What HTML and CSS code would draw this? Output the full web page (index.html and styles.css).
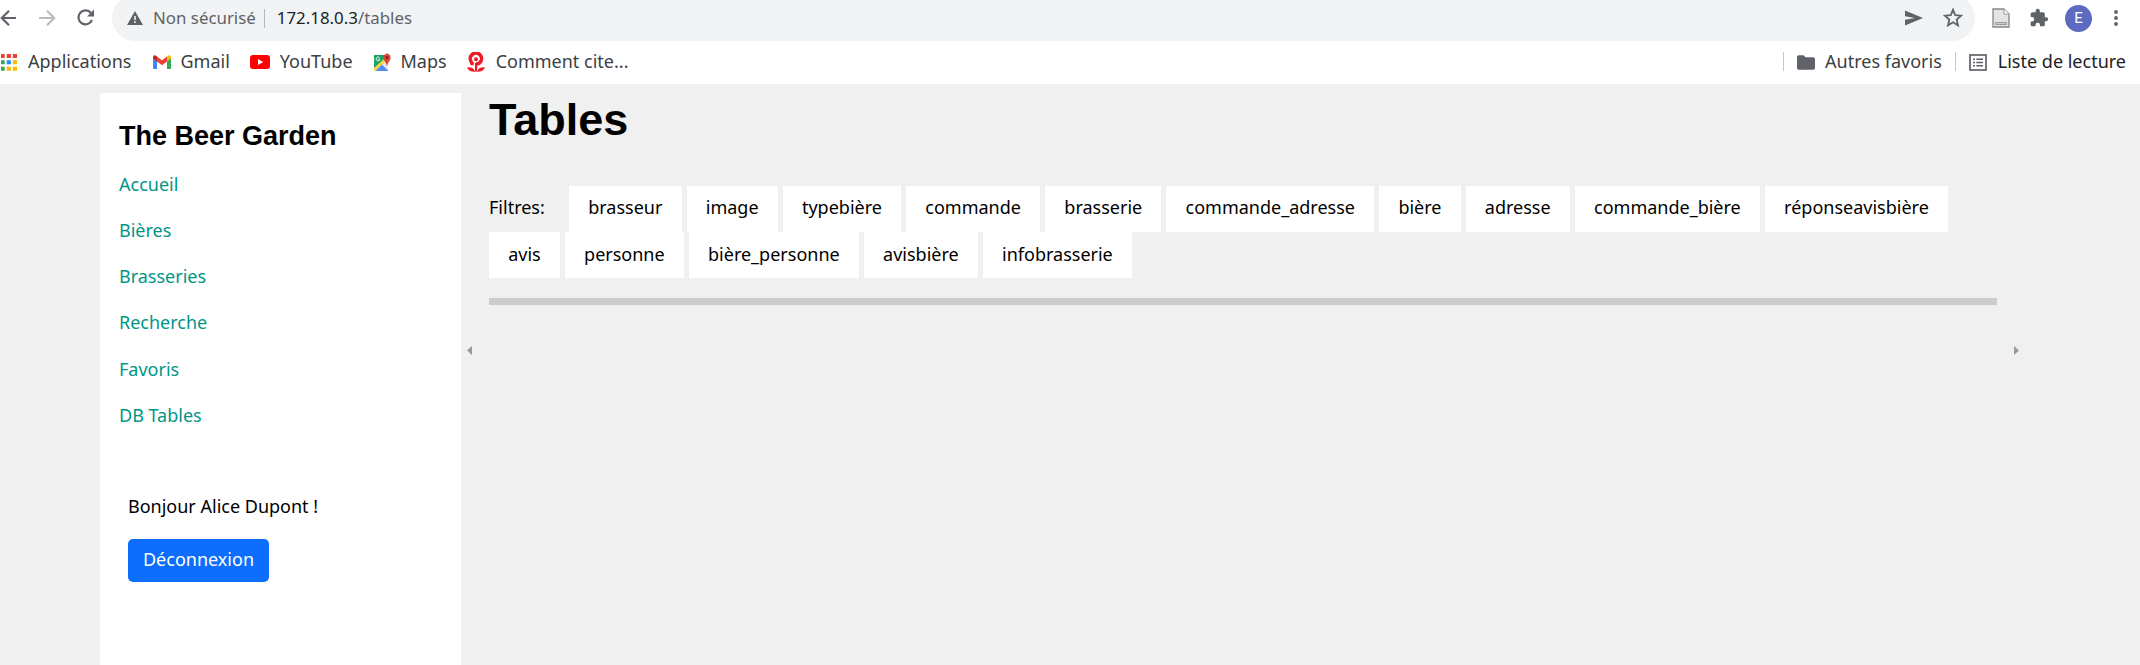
FILE: index.html
```html
<!DOCTYPE html>
<html lang="fr">
<head>
<meta charset="utf-8">
<title>Tables</title>
<link rel="stylesheet" href="styles.css">
</head>
<body>
<header class="chrome">
  <div class="toolbar">
    <div class="nav-icons">
      <svg class="back" width="20" height="18" viewBox="0 0 20 18" fill="none" stroke="#5f6368" stroke-width="2.2"><path d="M16 9H2M9 1.8L1.8 9L9 16.2"/></svg>
      <svg class="forward" width="18" height="18" viewBox="0 0 18 18" fill="none" stroke="#babcbe" stroke-width="2.2"><path d="M0 9H14.5M8 1.8L15.2 9L8 16.2"/></svg>
      <svg class="reload" width="18" height="18" viewBox="0 0 18 18" fill="none" stroke="#5f6368" stroke-width="2.2"><path d="M14 4A7 7 0 1 0 15 11"/><path d="M17 0.5V7.5H10Z" fill="#5f6368" stroke="none"/></svg>
    </div>
    <div class="omnibox">
      <svg class="warn" width="16" height="14" viewBox="0 0 16 14"><path d="M8 0L16 14H0Z" fill="#5f6368"/><path d="M7.2 5h1.6v4H7.2zM7.2 10.2h1.6v1.7H7.2z" fill="#f1f3f4"/></svg>
      <span class="security">Non sécurisé</span>
      <span class="divider"></span>
      <span class="url">172.18.0.3<span class="path">/tables</span></span>
      <svg class="send" width="18" height="16" viewBox="0 0 18 16"><path d="M0 0.5L18 8L0 15.5V9.7L10 8L0 6.3Z" fill="#5f6368"/></svg>
      <svg class="star" width="20" height="20" viewBox="0 0 18 18" fill="none" stroke="#5f6368" stroke-width="1.6"><path d="M9 1.500L11 6.400L16.300 6.900L12.300 10.400L13.500 15.600L9 12.800L4.500 15.600L5.700 10.400L1.700 6.900L7 6.400Z"/></svg>
    </div>
    <div class="extensions">
      <svg width="18" height="20" viewBox="0 0 18 20"><path d="M1 1H12L17 6V19H1Z" fill="#e4e4e4" stroke="#858585" stroke-width="1.3"/><path d="M12 1V6H17" fill="#fff" stroke="#9a9a9a"/><path d="M3.500 14.500H14.500V16.500H3.500Z" fill="#ccc" stroke="#8a8a8a" stroke-width=".8"/></svg>
      <svg class="puzzle" width="20" height="20" viewBox="0 0 24 24" fill="#5f6368"><path d="M20.5 11H19V7c0-1.1-.9-2-2-2h-4V3.500a2.500 2.500 0 0 0-5 0V5H4c-1.100 0-2 .9-2 2v3.800h1.500a2.700 2.700 0 0 1 0 5.400H2V20c0 1.100.9 2 2 2h3.800v-1.500a2.700 2.700 0 0 1 5.400 0V22H17c1.100 0 2-.9 2-2v-4h1.500a2.500 2.500 0 0 0 0-5z"/></svg>
      <span class="avatar">E</span>
      <svg class="more" width="4" height="16" viewBox="0 0 4 16" fill="#5f6368"><circle cx="2" cy="2" r="1.900"/><circle cx="2" cy="8" r="1.900"/><circle cx="2" cy="14" r="1.900"/></svg>
    </div>
  </div>
  <nav class="bookmarks">
    <a class="bm apps"><svg width="17" height="17" viewBox="0 0 17 17"><path d="M1 0h3.700v4H1zM6.700 0h4.200v4H6.700zM12.800 0H17v4h-4.200z" fill="#ea4335"/><path d="M1 6.300h3.700v4H1zM1 12.700h3.700v4H1z" fill="#34a853"/><path d="M6.700 6.300h4.200v4H6.700z" fill="#1a8cff"/><path d="M12.800 6.300H17v4h-4.200zM6.700 12.700h4.200v4H6.700zM12.800 12.700H17v4h-4.200z" fill="#fbbc04"/></svg><span>Applications</span></a>
    <a class="bm gmail"><svg width="18" height="14" viewBox="0 0 18 14"><path d="M0 3V13Q0 14 1 14H4V6Z" fill="#4285f4"/><path d="M18 3V13Q18 14 17 14H14V6Z" fill="#34a853"/><path d="M14 1.500L16 .2Q18 0 18 2V3.500L14 6.500Z" fill="#fbbc04"/><path d="M4 1.500L2 .2Q0 0 0 2V3.500L4 6.500Z" fill="#c5221f"/><path d="M4 1.500L9 5.300L14 1.500V6.500L9 10.300L4 6.500Z" fill="#ea4335"/></svg><span>Gmail</span></a>
    <a class="bm youtube"><svg width="20" height="14" viewBox="0 0 20 14"><rect width="20" height="14" rx="3" fill="#f00"/><path d="M8 4L13.300 7L8 10Z" fill="#fff"/></svg><span>YouTube</span></a>
    <a class="bm maps"><svg width="18" height="19" viewBox="0 0 18 19"><path d="M1 2H15V17H1Z" fill="#e8eaed"/><path d="M1 2H12L11 8L1 17Z" fill="#1ea362"/><path d="M1 15L11 6L13 8L3 18H1Z" fill="#ffd54a"/><path d="M2.500 18L9 11.500L15.500 18Z" fill="#4c8df6"/><path d="M14 .5A4 4 0 0 1 17.500 5C17.500 8 14.500 9 14 14C13.500 9 10.500 8 10.500 5A4 4 0 0 1 14 .5Z" fill="#dc4437"/><circle cx="14" cy="4.500" r="1.400" fill="#7b231e"/><path d="M6.500 4.700A1.900 1.900 0 1 0 6.900 6.300H5.200" fill="none" stroke="#fff" stroke-width=".9"/></svg><span>Maps</span></a>
    <a class="bm cite"><svg width="18" height="20" viewBox="0 0 18 20"><path d="M4.800 10.500A5.600 5.600 0 1 1 12.800 10.700Q11 12 9 12" fill="none" stroke="#ed1c24" stroke-width="3.600"/><g fill="#ed1c24"><circle cx="9" cy="7.200" r="2"/><circle cx="5" cy="11.500" r="2"/><path d="M8 11H10.200V19.500H8Z"/><path d="M0 15.500Q6 14.500 8.300 19.700Q2 20 0 15.500ZM18 15.500Q12 14.500 10 19.700Q16 20 18 15.500Z"/></g></svg><span>Comment cite...</span></a>
    <div class="bm-right">
      <span class="sep"></span>
      <a class="bm"><svg class="folder" width="18" height="15" viewBox="0 0 18 15"><path d="M0 2Q0 .3 1.700 .3H6.500L8.500 2.300H16.300Q18 2.300 18 4V13Q18 14.700 16.300 14.700H1.700Q0 14.700 0 13Z" fill="#5f6368"/></svg><span>Autres favoris</span></a>
      <span class="sep sep2"></span>
      <a class="bm reading"><svg class="list" width="18" height="17" viewBox="0 0 18 17"><rect x="1" y="1" width="16" height="15" fill="none" stroke="#5f6368" stroke-width="1.700"/><path d="M4 5.200h2M4 8.500h2M4 11.800h2M7.300 5.200H14M7.300 8.500H14M7.300 11.800H14" stroke="#5f6368" stroke-width="1.500"/></svg><span>Liste de lecture</span></a>
    </div>
  </nav>
</header>
<div class="page">
  <aside class="sidebar">
    <h3>The Beer Garden</h3>
    <ul class="menu">
      <li><a>Accueil</a></li><li><a>Bières</a></li><li><a>Brasseries</a></li><li><a>Recherche</a></li><li><a>Favoris</a></li><li><a>DB Tables</a></li>
    </ul>
    <div class="account">
      <p>Bonjour Alice Dupont !</p>
      <button class="logout">Déconnexion</button>
    </div>
  </aside>
  <div class="gutter"><span class="arrow-left"></span></div>
  <main class="content">
    <h1>Tables</h1>
    <div class="filters">
      <span class="label">Filtres:</span>
      <button>brasseur</button><button>image</button><button>typebière</button><button>commande</button><button>brasserie</button><button>commande_adresse</button><button>bière</button><button>adresse</button><button>commande_bière</button><button>réponseavisbière</button><button class="second">avis</button><button class="second">personne</button><button class="second">bière_personne</button><button class="second">avisbière</button><button class="second">infobrasserie</button>
    </div>
    <div class="rule"></div>
  </main>
  <div class="gutter right"><span class="arrow-right"></span></div>
</div>
</body>
</html>
```
FILE: styles.css
```css
* { box-sizing: border-box; }
body { margin: 0; height: 665px; overflow: hidden; background: #f0f0f0; color: #000; font: 18px/27px "Noto Sans", sans-serif; display: flex; flex-direction: column; }
svg { display: block; flex: none; }
h1, h3, p, ul { margin: 0; padding: 0; }
button { font: inherit; border: 0; color: #000; }

.chrome { height: 84px; flex: none; background: #fff; }
.toolbar { height: 41px; display: flex; overflow: hidden; font-size: 16.87px; white-space: nowrap; }
.nav-icons { width: 112px; height: 36px; display: flex; align-items: center; flex: none; }
.forward { margin-left: 19px; }
.reload { margin-left: 20px; }
.omnibox { width: 1863px; height: 46px; margin-top: -5px; border-radius: 23px; background: #f1f3f4; display: flex; align-items: center; padding: 0 12px 0 15px; flex: none; }
.omnibox .security, .omnibox .url { padding-bottom: 1px; }
.security { margin-left: 10px; color: #5f6368; }
.divider { width: 1px; height: 19px; background: #b4b7ba; margin: 0 12px 0 8px; }
.url { color: #202124; }
.path { color: #5f6368; }
.send { margin-left: auto; margin-right: 20px; }
.extensions { height: 36px; display: flex; align-items: center; padding-left: 17px; }
.puzzle { margin-left: 19px; }
.avatar { width: 27px; height: 27px; margin: 0 22px 0 16px; border-radius: 50%; background: #5c6bc0; color: #fff; font: 15px/27px Roboto, sans-serif; text-align: center; }

.bookmarks { height: 43px; display: flex; align-items: center; padding-bottom: 2px; color: #3c4043; white-space: nowrap; }
.bm { display: flex; align-items: center; gap: 10px; }
.bm svg { margin-top: 1px; }
.apps { gap: 11px; }
.gmail { margin-left: 22px; gap: 9px; }
.youtube { margin-left: 20px; }
.maps { margin-left: 20px; }
.cite { margin-left: 20px; gap: 11px; }
.bm-right { margin-left: auto; display: flex; align-items: center; padding-right: 14px; }
.sep { width: 1px; height: 19px; background: #c6c8ca; margin-right: 13px; }
.sep2 { margin-left: 13px; }
.reading { gap: 11px; color: #202124; }

.page { flex: 1; display: flex; padding-left: 100px; }
.sidebar { width: 361px; margin-top: 9px; padding: 23px 19px 0; background: #fff; }
.sidebar h3 { font: bold 27px/41px "Liberation Sans", sans-serif; }
.menu { list-style: none; margin-top: 4px; }
.menu li { height: 46.15px; line-height: 46px; color: #009688; }
.account { margin-top: 41.3px; padding-left: 9px; }
.account p { line-height: 54px; }
.logout { display: block; height: 43px; width: 141px; margin-top: 6px; border-radius: 5px; background: #0d6efd; color: #fff; padding: 0 0 2px; }
.gutter { width: 28px; padding: 262px 0 0 6px; }
.content { width: 1508px; }
.content h1 { margin-top: 9px; font: bold 45px/54px "Liberation Sans", sans-serif; }
.filters { display: flex; flex-wrap: wrap; column-gap: 5px; margin-top: 39px; padding-right: 40px; }
.filters .label { line-height: 43px; width: 75px; }
.filters button { height: 46px; padding: 0 19.2px 3px; background: #fff; }
.filters .second { padding-bottom: 1px; }
.rule { height: 7px; margin-top: 20px; background: #ccc; }
.right { padding-left: 17px; }
.arrow-left, .arrow-right { display: block; width: 5px; height: 9px; background: #999; }
.arrow-left { clip-path: polygon(100% 0, 100% 100%, 0 50%); }
.arrow-right { clip-path: polygon(0 0, 100% 50%, 0 100%); }
```
